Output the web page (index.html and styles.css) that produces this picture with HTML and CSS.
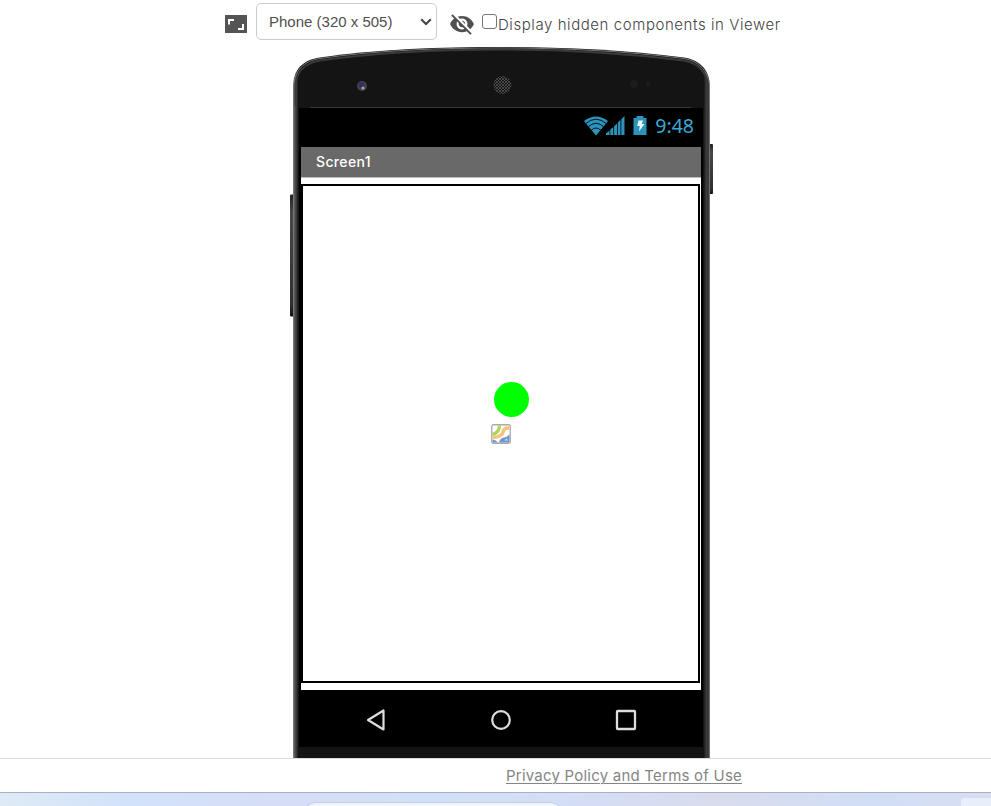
FILE: index.html
```html
<!DOCTYPE html>
<html lang="en">
<head>
<meta charset="utf-8">
<title>Screen1 Viewer</title>
<link rel="stylesheet" href="styles.css">
</head>
<body>
<header class="toolbar">
  <svg class="ratio-icon" width="22" height="18" viewBox="0 0 22 18"><path fill="#545454" d="M0 0h22v18H0z"/><path fill="none" stroke="#fff" stroke-width="2" d="M4 9.500V5h5M18 9v5h-5"/></svg>
  <div class="size-select"><span>Phone (320 x 505)</span><svg width="12" height="8" viewBox="0 0 12 8"><path d="M1.2 1.2 6 6l4.800-4.800" fill="none" stroke="#444" stroke-width="2"/></svg></div>
  <svg class="eye-icon" width="26" height="26" viewBox="0 0 24 24"><path fill="#505050" d="M12 7c2.76 0 5 2.24 5 5 0 .65-.13 1.26-.36 1.83l2.92 2.92c1.51-1.26 2.7-2.89 3.43-4.75-1.73-4.39-6-7.5-11-7.5-1.4 0-2.74.25-3.98.7l2.16 2.16C10.74 7.13 11.35 7 12 7zM2 4.27l2.28 2.28.46.46C3.08 8.3 1.78 10.02 1 12c1.73 4.39 6 7.5 11 7.5 1.55 0 3.03-.3 4.38-.84l.42.42L19.73 22 21 20.73 3.27 3 2 4.27zM7.53 9.8l1.55 1.55c-.05.21-.08.43-.08.65 0 1.66 1.34 3 3 3 .22 0 .44-.03.65-.08l1.55 1.55c-.67.33-1.41.53-2.2.53-2.76 0-5-2.24-5-5 0-.79.2-1.53.53-2.2zm4.31-.78 3.15 3.15.02-.16c0-1.66-1.34-3-3-3l-.17.01z"/></svg>
  <span class="checkbox"></span><span class="check-label">Display hidden components in Viewer</span>
</header>
<main class="viewer">
  <div class="phone">
    <svg class="shell" width="423" height="712" viewBox="0 0 423 712">
      <defs>
        <linearGradient id="side"><stop offset="0" stop-color="#858585"/><stop offset=".004" stop-color="#555"/><stop offset=".009" stop-color="#343434"/><stop offset=".013" stop-color="#141414"/><stop offset=".985" stop-color="#141414"/><stop offset=".991" stop-color="#3c3c3c"/><stop offset=".996" stop-color="#333"/><stop offset="1" stop-color="#888"/></linearGradient>
        <linearGradient id="key" x2="0" y2="1"><stop offset="0" stop-color="#222"/><stop offset=".15" stop-color="#484848"/><stop offset=".9" stop-color="#303030"/><stop offset="1" stop-color="#111"/></linearGradient>
        <pattern id="mesh" width="3" height="3" patternUnits="userSpaceOnUse"><path d="M0 0l3 3M3 0 0 3" stroke="#666" stroke-width=".6"/></pattern>
      </defs>
      <rect y="148.500" width="6" height="122" rx="1" fill="url(#key)"/>
      <rect x="417" y="98" width="6" height="50" rx="1" fill="url(#key)"/>
      <path fill="url(#side)" d="M3 712V40C3.500 23 13 14 30 11.500C89 3 150 1 212 1S335 4 394 11.500C410 14 419.500 24 420 40V712Z"/>
      <path fill="none" stroke="#777" stroke-width="1" d="M4 60V40C4.500 24 14 15 30 12.500C89 4 150 2 212 2S335 5 394 12.500C409 15 418.500 25 419.500 40V60"/>
      <path fill="none" stroke="#3a3a3a" stroke-width="2" d="M5.500 60V40C6 26 15 17 30 14.500C89 6 150 3.500 212 3.500S335 7 394 14.500C408 17 417 26 418 40V60"/>
      <path stroke="#383838" d="M20 61.500h381"/>
      <circle cx="72" cy="40" r="5" fill="#444"/><circle cx="71.500" cy="39" r="3" fill="#30306a"/><circle cx="73" cy="42" r="1.500" fill="#aaa"/>
      <circle cx="212.500" cy="39" r="9" fill="url(#mesh)"/>
      <circle cx="344" cy="38" r="4" fill="#1c1c1c"/><circle cx="358" cy="38" r="2.500" fill="#1c1c1c"/>
    </svg>
    <div class="display">
      <div class="status">
        <svg width="66" height="22" viewBox="0 0 66 22">
          <path fill="#2e93bb" d="M0 6Q12 -3 24 6L12 20.500z"/>
          <g fill="none" stroke="#00141c" stroke-width="1"><path d="M1.500 8.800Q12-.5 22.500 8.800"/><path d="M4 12Q12 4.500 20 12"/><path d="M7 15.500Q12 10.500 17 15.500"/></g>
          <path fill="#2e93bb" d="M22 20v-1.500l3.500-3V20zM26.300 20v-5.500l3-2.500V20zM30.100 20v-8.800L33 8.500V20zM33.800 20V7.500L36.500 5v15zM37.300 20V4.300L40.500 1v19z"/>
          <path fill="#2e93bb" d="M49.500 3h3V1h7v2h3v17h-13z"/><path fill="#e8f6fa" d="M54.500 5.500h4.500L57.800 9h2.700l-5.500 7.500.8-5.500h-2.600z"/>
        </svg>
        <span>9:48</span>
      </div>
      <div class="screen">
        <div class="title">Screen1</div>
        <div class="canvas">
          <div class="ball"></div>
          <svg class="sprite" width="20" height="20" viewBox="0 0 20 20"><rect x=".75" y=".75" width="18.500" height="18.500" rx="1.500" fill="#fff" stroke="#aaa" stroke-width="1.300"/><path fill="none" stroke="#a8d552" stroke-width="3.200" d="M8.500 1.500Q8.500 8.500 1.500 10.500"/><path fill="none" stroke="#f8c27e" stroke-width="3.600" d="M18.500 4Q12.500 3.500 12 8 11 13 1.500 13.500"/><path fill="#7195ce" d="M1.500 15.500Q5 16 7 18.500H1.500zM8 18.500Q9 14 13 13.500q3-.5 5.500-3v8z"/><path d="M13.500 16.500l2-2 1.500 2z" fill="#dce7f8"/></svg>
        </div>
      </div>
      <div class="nav">
        <svg width="22" height="24" viewBox="0 0 22 24"><path d="M3 12 18.500 2.500v19z" fill="none" stroke="#ddd" stroke-width="2.200" stroke-linejoin="round"/></svg>
        <svg width="22" height="24" viewBox="0 0 22 24"><circle cx="11" cy="12" r="8.800" fill="none" stroke="#ddd" stroke-width="2.200"/></svg>
        <svg width="22" height="24" viewBox="0 0 22 24"><rect x="2" y="3" width="18" height="18" rx=".8" fill="none" stroke="#ddd" stroke-width="2.300"/></svg>
      </div>
    </div>
  </div>
</main>
<footer class="footer"><a>Privacy Policy and Terms of Use</a></footer>
<div class="taskbar"><div class="search"></div><div class="tray"></div></div>
</body>
</html>
```
FILE: styles.css
```css
* { box-sizing: border-box; }
body { margin: 0; width: 991px; height: 806px; overflow: hidden; display: flex; flex-direction: column; background: #fff; font-family: Inter, sans-serif; }
svg { display: block; flex: none; }
.toolbar { height: 46px; flex: none; display: flex; align-items: flex-start; padding-left: 225px; color: #444; }
.ratio-icon { margin-top: 15px; }
.size-select { width: 181px; height: 37px; margin: 3px 0 0 9px; padding: 0 4px 0 12px; border: 1px solid #ccc; border-radius: 5px; display: flex; align-items: center; justify-content: space-between; font: 15px/35px "Liberation Sans", sans-serif; color: #505050; }
.eye-icon { margin: 11px 0 0 12px; }
.checkbox { width: 15px; height: 15px; margin: 14px 0 0 7px; border: 1px solid #767676; border-radius: 3px; }
.check-label { margin: 14px 0 0 1px; font-size: 15px; line-height: 21px; letter-spacing: .57px; font-weight: 300; white-space: nowrap; }
.viewer { height: 712px; flex: none; padding-left: 290px; }
.phone { width: 423px; height: 712px; display: grid; }
.shell, .display { grid-area: 1 / 1; }
.display { width: 404px; height: 639px; margin: 62px 0 0 9px; background: #000; display: flex; flex-direction: column; z-index: 1; }
.status { height: 39px; display: flex; justify-content: flex-end; align-items: flex-start; padding: 7px 9px 0 0; gap: 5px; color: #3aa8d4; font: 19.5px/22px "Noto Sans", sans-serif; }
.screen { width: 400px; height: 543px; margin-left: 2px; background: #fff; }
.title { height: 31px; padding-left: 15px; background: #696969; border-bottom: 1px solid #bbb; color: #fff; font-size: 14px; line-height: 30px; font-weight: 500; letter-spacing: .35px; }
.canvas { width: 399px; height: 499px; margin-top: 6px; border: 2px solid #000; padding: 196px 0 0 188px; }
.ball { width: 35px; height: 35px; margin-left: 3px; border-radius: 50%; background: #0f0; }
.sprite { margin-top: 7px; }
.nav { height: 57px; display: flex; gap: 103px; padding: 18px 0 0 66px; }
.footer { height: 34px; flex: none; border-top: 1px solid #ddd; padding-left: 506px; color: #858585; font-size: 15px; line-height: 34px; }
.footer a { text-decoration: underline; text-underline-offset: 2px; text-decoration-thickness: 1px; letter-spacing: .22px; white-space: nowrap; }
.taskbar { height: 14px; flex: none; overflow: hidden; border-top: 1px solid #a9b0c0; background: linear-gradient(90deg, #deeaf5, #d2e2fa 13%, #d7ddf6 29%, #d0e0f8 43%, #d5ddf5 60%, #d8dced 72%, #d2def6 88%, #d8def1); display: flex; justify-content: space-between; padding-left: 300px; }
.search { width: 266px; height: 34px; margin-top: 9px; border: 1px solid #c4cde4; border-radius: 17px; background: #f0f5fd; }
.tray { width: 30px; height: 30px; margin-top: 5px; border-radius: 4px 0 0 4px; background: #e8eefa; }
```
